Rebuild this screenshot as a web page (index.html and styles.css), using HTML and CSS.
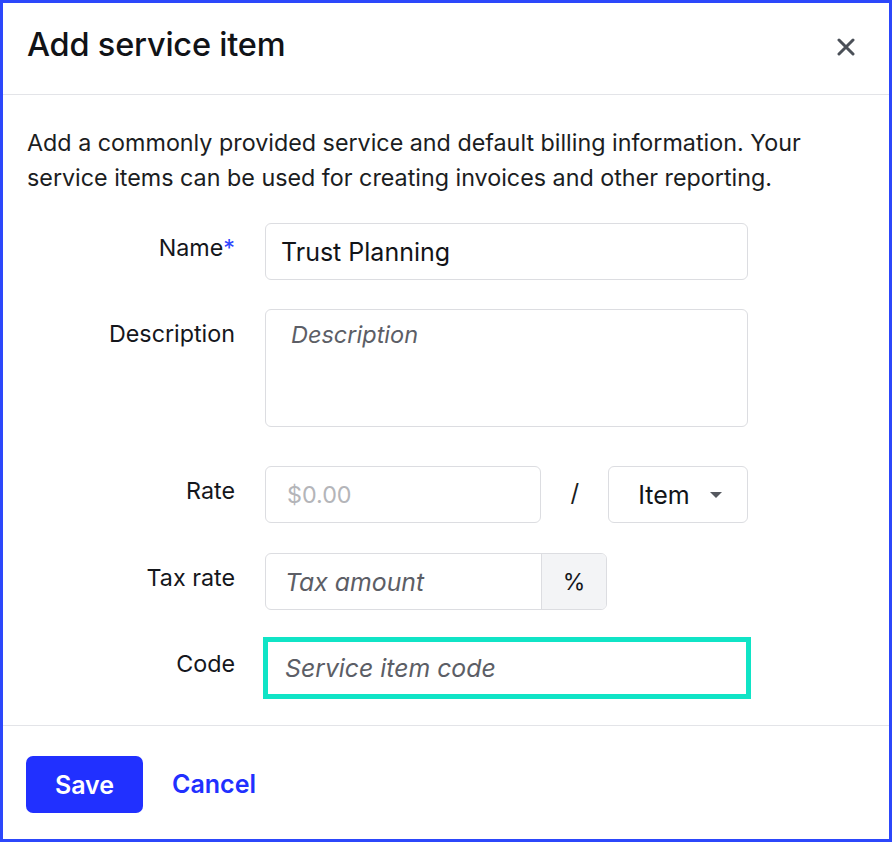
FILE: index.html
```html
<!DOCTYPE html>
<html>
<head>
<meta charset="utf-8">
<link rel="stylesheet" href="styles.css">
</head>
<body>
<div class="modal">
  <div class="header">
    <h1 class="title">Add service item</h1>
    <button class="close" aria-label="Close">
      <svg width="18" height="18" viewBox="0 0 18 18"><path d="M2 2 L16 16 M16 2 L2 16" stroke="#4b5058" stroke-width="3" stroke-linecap="round"/></svg>
    </button>
  </div>
  <div class="body">
    <p class="intro">Add a commonly provided service and default billing information. Your service items can be used for creating invoices and other reporting.</p>
    <div class="form">
      <div class="row row-name">
        <label class="label">Name<span class="req">*</span></label>
        <div class="field input input-value">Trust Planning</div>
      </div>
      <div class="row row-desc">
        <label class="label">Description</label>
        <div class="field textarea placeholder">Description</div>
      </div>
      <div class="row row-rate">
        <label class="label">Rate</label>
        <div class="rate-group">
          <div class="input rate-input money">$0.00</div>
          <span class="slash">/</span>
          <div class="input select">
            <span>Item</span>
            <svg width="14" height="8" viewBox="0 0 14 8"><path d="M1 1 L13 1 L7 7 Z" fill="#55585f"/></svg>
          </div>
        </div>
      </div>
      <div class="row row-tax">
        <label class="label">Tax rate</label>
        <div class="tax-group">
          <div class="tax-input placeholder">Tax amount</div>
          <div class="addon">%</div>
        </div>
      </div>
      <div class="row row-code">
        <label class="label">Code</label>
        <div class="field input focused placeholder">Service item code</div>
      </div>
    </div>
  </div>
  <div class="footer">
    <button class="btn-save">Save</button>
    <button class="btn-cancel">Cancel</button>
  </div>
</div>
</body>
</html>
```
FILE: styles.css
```css
* { box-sizing: border-box; }
html, body { margin: 0; padding: 0; }
body {
  font-family: Inter, "Noto Sans", "Liberation Sans", sans-serif;
  color: #15171c;
  background: #fff;
}
.modal {
  width: 892px;
  height: 842px;
  border: 3px solid #2c47fb;
  display: flex;
  flex-direction: column;
}
.header {
  height: 92px;
  flex: none;
  border-bottom: 1px solid #e3e4e8;
  display: flex;
  align-items: center;
  justify-content: space-between;
  padding: 0 34px 0 24px;
}
.title {
  margin: 0;
  font-size: 32.5px;
  font-weight: 500;
  letter-spacing: -0.2px;
  color: #111317;
  padding-bottom: 8px;
}
.close {
  border: 0;
  background: none;
  padding: 0;
  width: 18px;
  height: 18px;
  margin-bottom: 4px;
  display: flex;
}
.body {
  flex: 1;
  padding: 30px 24px 0 24px;
}
.intro {
  margin: 0;
  font-size: 23.3px;
  line-height: 35px;
  color: #1b1d22;
}
.form {
  display: flex;
  flex-direction: column;
  margin-top: 28px;
}
.row {
  display: grid;
  grid-template-columns: 208px 483px;
  column-gap: 30px;
  align-items: start;
}
.row-desc { margin-top: 29px; }
.row-rate { margin-top: 39px; }
.row-tax { margin-top: 30px; }
.row-code { margin-top: 28px; }
.label {
  text-align: right;
  font-size: 23.3px;
  line-height: 26px;
  padding-top: 12px;
  color: #15171c;
}
.row-code .label { padding-top: 13px; }
.req { color: #2e46ff; }
.input {
  height: 57px;
  border: 1px solid #dcdde1;
  border-radius: 6px;
  display: flex;
  align-items: center;
  padding: 0 15px;
  font-size: 25px;
  background: #fff;
}
.input-value { color: #121418; }
.placeholder {
  font-style: italic;
  color: #5c5e66;
  font-size: 24.8px;
}
.textarea {
  height: 118px;
  border: 1px solid #dcdde1;
  border-radius: 6px;
  padding: 12px 25px;
  line-height: 26px;
  font-size: 23.5px;
}
.rate-group {
  display: flex;
  align-items: center;
}
.rate-input {
  width: 277px;
  padding-left: 21px;
}
.money { color: #b4b5b9; font-size: 23.3px; font-style: normal; }
.slash {
  width: 67px;
  text-align: center;
  font-size: 24px;
  color: #1a1c20;
  padding-bottom: 4px;
}
.select {
  width: 140px;
  padding-left: 29px;
  padding-right: 24px;
  justify-content: space-between;
  color: #121418;
}
.select svg { margin-top: 1px; }
.tax-group {
  display: flex;
  width: 342px;
  height: 57px;
  border: 1px solid #dcdde1;
  border-radius: 6px;
  overflow: hidden;
}
.tax-input {
  flex: 1;
  display: flex;
  align-items: center;
  padding-left: 19px;
}
.addon {
  width: 65px;
  background: #f3f4f6;
  border-left: 1px solid #dcdde1;
  display: flex;
  align-items: center;
  justify-content: center;
  font-size: 23px;
  color: #15171c;
}
.focused {
  border: 3px solid #10e4c6;
  border-radius: 0;
  box-shadow: 0 0 0 2px #10e4c6;
  height: 58px;
  margin-top: 1px;
  width: 484px;
  padding-left: 17px;
}
.footer {
  flex: none;
  height: 114px;
  border-top: 1px solid #e3e4e8;
  display: flex;
  align-items: center;
  padding: 0 23px 0 23px;
  gap: 29px;
}
.btn-save {
  width: 117px;
  height: 57px;
  background: #2130ff;
  color: #fff;
  border: 0;
  border-radius: 7px;
  font-family: inherit;
  font-size: 25px;
  font-weight: 600;
  margin-top: 4px;
}
.btn-cancel {
  background: none;
  border: 0;
  padding: 0;
  font-family: inherit;
  font-size: 25px;
  font-weight: 600;
  color: #2130ff;
  margin-top: 2px;
}
```
